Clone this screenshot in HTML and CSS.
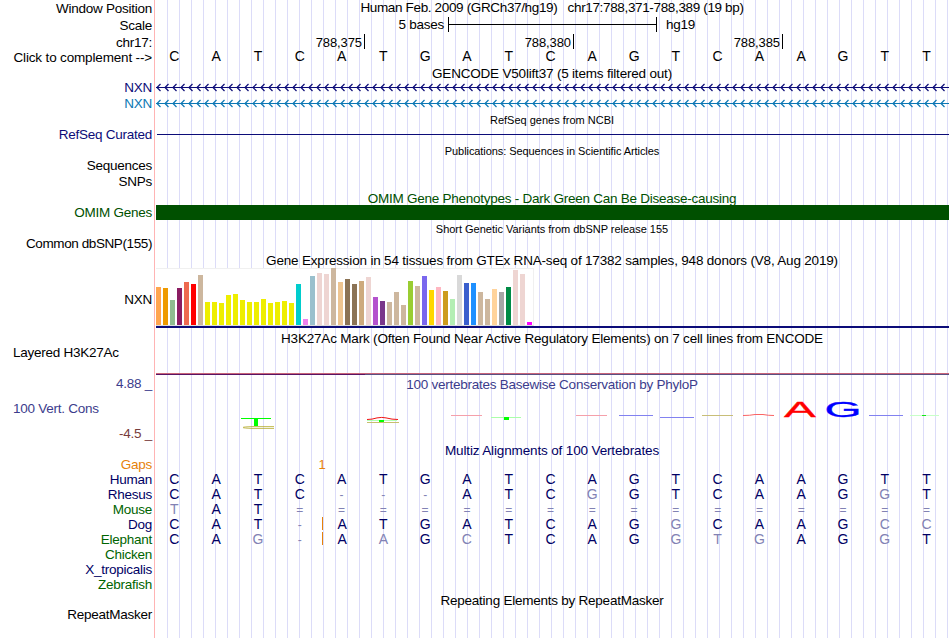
FILE: index.html
```
<!DOCTYPE html>
<html lang="en">
<head>
    <meta charset="UTF-8">
    <title>Genome Browser chr17:788,371-788,389</title>
    <link rel="stylesheet" href="styles.css">
</head>
<body>
    <div class="browser">
        <!-- position, scale, ruler -->
        <div class="row h17">
            <div class="label down">Window Position</div>
            <div class="view"><p class="title t-pos">Human Feb. 2009 (GRCh37/hg19)   chr17:788,371-788,389 (19 bp)</p></div>
        </div>
        <div class="row h17">
            <div class="label down">Scale</div>
            <div class="view scale">
                <span class="size">5 bases</span>
                <span class="ruler"></span>
                <span class="db">hg19</span>
            </div>
        </div>
        <div class="row h15">
            <div class="label down">chr17:</div>
            <div class="view ticks">
                <span>788,375</span>
                <span>788,380</span>
                <span>788,385</span>
            </div>
        </div>
        <div class="row h17">
            <div class="label down t-click">Click to complement --&gt;</div>
            <div class="view"><div class="bases black" data-seq="CATCATGATCAGTCAAGTT"></div></div>
        </div>

        <!-- genes -->
        <div class="row h14">
            <div class="label"></div>
            <div class="view"><p class="title t-gencode">GENCODE V50lift37 (5 items filtered out)</p></div>
        </div>
        <div class="row h16">
            <div class="label navy">NXN</div>
            <div class="view"><svg class="arrows navy" width="793" height="16"></svg></div>
        </div>
        <div class="row h16">
            <div class="label blue">NXN</div>
            <div class="view"><svg class="arrows blue" width="793" height="16"></svg></div>
        </div>
        <div class="row h15">
            <div class="label"></div>
            <div class="view"><p class="title small">RefSeq genes from NCBI</p></div>
        </div>
        <div class="row h16">
            <div class="label navy">RefSeq Curated</div>
            <div class="view"><div class="refseq"></div></div>
        </div>
        <div class="row h15">
            <div class="label"></div>
            <div class="view"><p class="title small t-pub">Publications: Sequences in Scientific Articles</p></div>
        </div>
        <div class="row h16">
            <div class="label">Sequences</div>
            <div class="view"></div>
        </div>
        <div class="row h16">
            <div class="label">SNPs</div>
            <div class="view"></div>
        </div>
        <div class="row h15">
            <div class="label"></div>
            <div class="view"><p class="title green down t-omim">OMIM Gene Phenotypes - Dark Green Can Be Disease-causing</p></div>
        </div>
        <div class="row h16">
            <div class="label green">OMIM Genes</div>
            <div class="view"><div class="omim"></div></div>
        </div>
        <div class="row h15">
            <div class="label"></div>
            <div class="view"><p class="title small t-snp">Short Genetic Variants from dbSNP release 155</p></div>
        </div>
        <div class="row h16">
            <div class="label t-common">Common dbSNP(155)</div>
            <div class="view"></div>
        </div>

        <!-- expression -->
        <div class="row h16">
            <div class="label"></div>
            <div class="view"><p class="title down t-gtex">Gene Expression in 54 tissues from GTEx RNA-seq of 17382 samples, 948 donors (V8, Aug 2019)</p></div>
        </div>
        <div class="row h62">
            <div class="label gtex-label">NXN</div>
            <div class="view">
                <div class="gtex" id="gtex"></div>
                <div class="gtex-line"></div>
            </div>
        </div>
        <div class="row h15">
            <div class="label"></div>
            <div class="view"><p class="title down t-h3k">H3K27Ac Mark (Often Found Near Active Regulatory Elements) on 7 cell lines from ENCODE</p></div>
        </div>
        <div class="row h32">
            <div class="label left">Layered H3K27Ac</div>
            <div class="view"><div class="h3k"></div></div>
        </div>

        <!-- conservation -->
        <div class="row h65">
            <div class="label cons">
                <span class="max">4.88 _</span>
                <span class="name">100 Vert. Cons</span>
                <span class="min">-4.5 _</span>
            </div>
            <div class="view">
                <p class="title indigo t-phylo">100 vertebrates Basewise Conservation by PhyloP</p>
                <svg class="logo" width="793" height="50" viewBox="156 392 793 50">
                    <path fill="#0f0" d="M241 418h30v1h-13v7h-4v-7h-13z"/>
                    <path fill="none" stroke="#b4aa28" stroke-width=".8" d="M274 426.6h-22q-9 .3-9 .9t9 .9h22"/>
                    <path fill="none" stroke="#f01414" d="M367 419.5q5 0 10-1.6 5-1 9 0 6 1.600 12 1.600"/>
                    <path fill="#b4ffb4" d="M367 420h30v1h-30z"/>
                    <path fill="#0f0" d="M379 420h5v2h-5z"/>
                    <path fill="#c8be6e" d="M367 422h32v1h-32z"/>
                    <path fill="#f5a0aa" d="M451 415h31v1h-31zM576 415h31v1h-31z"/>
                    <path fill="#aaffaa" d="M491 417h30v1h-30z"/>
                    <path fill="#0f0" d="M504 417h5v3h-5z"/>
                    <path fill="#8282f0" d="M619 415h34v1h-34zM660 417h34v1h-34zM869 415h34v1h-34z"/>
                    <path fill="#c8be78" d="M702 415h31v1h-31z"/>
                    <path fill="none" stroke="#fa6464" d="M743 415.500q7 0 12-1h8q5 1 11 1"/>
                    <path fill="#c8ffc8" d="M910 415h29v1h-29z"/>
                    <path fill="#14e614" d="M922 415h4v1h-4z"/>
                    <text transform="translate(784 417) scale(2.170 1)" fill="#f00" stroke="#f00">A</text>
                    <text transform="translate(824.500 417) scale(2.170 1)" fill="#00f" stroke="#00f">G</text>
                </svg>
            </div>
        </div>

        <!-- alignment -->
        <div class="row h15">
            <div class="label"></div>
            <div class="view"><p class="title dark down t-multiz">Multiz Alignments of 100 Vertebrates</p></div>
        </div>
        <div class="row h15">
            <div class="label orange">Gaps</div>
            <div class="view"><div class="bases"><span class="gap">1</span></div></div>
        </div>
        <div class="row h15">
            <div class="label dark">Human</div>
            <div class="view"><div class="bases" data-seq="CATCATGATCAGTCAAGTT"></div></div>
        </div>
        <div class="row h15">
            <div class="label dark">Rhesus</div>
            <div class="view"><div class="bases" data-seq="CATC---ATCgGTCAAGgT"></div></div>
        </div>
        <div class="row h15">
            <div class="label forest">Mouse</div>
            <div class="view"><div class="bases" data-seq="tAT================"></div></div>
        </div>
        <div class="row h15">
            <div class="label dark">Dog</div>
            <div class="view"><div class="bases" data-seq="CAT-|ATGATCAGgCAAGcc"></div></div>
        </div>
        <div class="row h15">
            <div class="label forest">Elephant</div>
            <div class="view"><div class="bases" data-seq="CAg-|AaGcTCAGgtgAGgT"></div></div>
        </div>
        <div class="row h15">
            <div class="label forest">Chicken</div>
            <div class="view"></div>
        </div>
        <div class="row h15">
            <div class="label dark">X_tropicalis</div>
            <div class="view"></div>
        </div>
        <div class="row h15">
            <div class="label forest">Zebrafish</div>
            <div class="view"></div>
        </div>
        <div class="row h15">
            <div class="label"></div>
            <div class="view"><p class="title down t-rep">Repeating Elements by RepeatMasker</p></div>
        </div>
        <div class="row h31">
            <div class="label">RepeatMasker</div>
            <div class="view"></div>
        </div>
    </div>
    <script src="script.js"></script>
</body>
</html>
```
FILE: styles.css
```
* {
    padding: 0;
    margin: 0;
    box-sizing: border-box;
}
body {
    width: 950px;
    height: 638px;
    overflow: hidden;
    background-color: #fff;
    font: 13.5px/15px "Liberation Sans", Arial, sans-serif;
    letter-spacing: -0.25px;
    color: #000;
}
.browser {
    width: 949px;
}
.row {
    display: flex;
}
.h14 { height: 14px; }
.h15 { height: 15px; }
.h16 { height: 16px; }
.h17 { height: 17px; }
.h31 { height: 31px; }
.h32 { height: 32px; }
.h62 { height: 62px; }
.h65 { height: 65px; }

.label {
    width: 154px;
    padding-right: 2px;
    text-align: right;
    white-space: pre;
}
.label.left {
    padding-left: 13px;
    text-align: left;
}
.down {
    padding-top: 1px;
}
/* red edge, then a blue guide line every 12px */
.view {
    width: 795px;
    border-left: 1px solid #ffb4b4;
    padding-left: 1px;
    background: linear-gradient(to right, transparent 11px, #dcdcf8 11px) 0 0 / 12px 100% content-box content-box;
}
.title {
    margin-left: -1px;
    text-align: center;
    white-space: pre;
}
.small {
    padding-top: 1px;
    font-size: 11px;
    letter-spacing: 0;
}
.t-pos { letter-spacing: -0.35px; }
.t-click { letter-spacing: -0.16px; }
.t-common { letter-spacing: -0.4px; }
.t-gencode,
.t-gtex,
.t-h3k { letter-spacing: -0.19px; }
.t-multiz { letter-spacing: -0.14px; }
.t-rep { letter-spacing: -0.24px; }
.t-pub { letter-spacing: -0.07px; }
.t-snp { letter-spacing: -0.02px; }

.navy { color: #0c0c78; }
.blue { color: #0c78b4; }
.dark { color: #000064; }
.green { color: #005000; }
.forest { color: #006400; }
.indigo { color: #3c3c8c; }
.orange { color: #e6820a; }

/* scale bar */
.scale {
    display: flex;
}
.size {
    width: 288px;
    text-align: right;
}
.ruler {
    width: 209px;
    height: 15px;
    margin-left: 4px;
    border-left: 1px solid #000;
    border-right: 1px solid #000;
    background: linear-gradient(#000, #000) 0 7px / 100% 1px no-repeat;
}
.db {
    margin-left: 9px;
}
.ticks {
    display: flex;
}
.ticks span {
    width: 209px;
    height: 15px;
    padding: 2px 2px 0 0;
    border-right: 1px solid #000;
    font-size: 13px;
    line-height: 13px;
    letter-spacing: -0.1px;
    text-align: right;
}

.bases {
    display: grid;
    grid-template-columns: repeat(19, 1fr);
    width: 794px;
    margin-left: -1px;
    font-size: 14px;
    letter-spacing: 0;
    color: #000064;
}
.bases.black {
    color: #000;
}
.bases span {
    height: 13px;
    padding-right: 3px;
    text-align: center;
}
.bases .pale {
    color: #8282b4;
}
.bases .sign {
    padding-top: 1px;
    font-size: 12px;
}
.bases .insert {
    border-left: 1px solid #e6820a;
}
.bases .gap {
    grid-column: 1 / 9;
    padding: 0;
    font-size: 13px;
    color: #e6820a;
}

.arrows {
    display: block;
}
.refseq {
    height: 1px;
    margin: 7px 0 0 1px;
    background-color: #0c0c78;
}
.omim {
    height: 15px;
    background-color: #005000;
}

/* bar chart */
.gtex-label {
    padding-top: 24px;
}
.gtex {
    display: flex;
    align-items: flex-end;
    gap: 2px;
    width: 378px;
    height: 58px;
    border: 1px solid #f0f0f0;
    border-left: 0;
    border-bottom-color: #dcdcdc;
    background-color: #fff;
}
.gtex i {
    flex: none;
    width: 5px;
}
.gtex-line {
    height: 2px;
    background-color: #0c0c78;
}
.h3k {
    height: 2px;
    margin-top: 28px;
    background: linear-gradient(#c86478, #c86478) 0 0 / 100% 1px no-repeat,
        linear-gradient(to right, #5a1464 209px, #5a5082 209px);
}

.cons {
    display: flex;
    flex-direction: column;
    margin-top: -1px;
    color: #3c3c8c;
}
.cons .name {
    margin: 10px 0 10px 13px;
    text-align: left;
}
.cons .min {
    color: #783c3c;
}
.logo {
    display: block;
    font-size: 22px;
    letter-spacing: 0;
}
.logo text {
    stroke-width: 0.3px;
}
```
FILE: script.js
```
// bases: small letter = differs from human, | = insert before the next base
var rows = document.querySelectorAll(".bases[data-seq]");
for (var i = 0; i < rows.length; i++) {
    var seq = rows[i].getAttribute("data-seq");
    var insert = false;
    for (var j = 0; j < seq.length; j++) {
        var c = seq[j];
        if (c == "|") {
            insert = true;
            continue;
        }
        var cell = document.createElement("span");
        cell.textContent = c.toUpperCase();
        if (c < "A" || c > "Z") {
            cell.classList.add("pale");
        }
        if (c == "-" || c == "=") {
            cell.classList.add("sign");
        }
        if (insert) {
            cell.classList.add("insert");
            insert = false;
        }
        rows[i].appendChild(cell);
    }
}

// strand arrows every 8px
var arrows = document.querySelectorAll(".arrows");
for (var i = 0; i < arrows.length; i++) {
    var d = "";
    for (var x = 1; x < 790; x += 8) {
        d += "M" + (x + 3.5) + " 4L" + x + " 7.5L" + (x + 3.5) + " 11";
    }
    arrows[i].innerHTML = '<path stroke="currentColor" d="M0 7.5H793"/>' +
        '<path fill="none" stroke="currentColor" stroke-width="1.2" d="' + d + '"/>';
}

// tissues: colour, height
var tissues = [
    ["#FFA54F", 38], ["#EE9A00", 37], ["#8FBC8F", 25], ["#8B1C62", 37], ["#EE6A50", 43], ["#FF0000", 41],
    ["#CDB79E", 50], ["#EEEE00", 23], ["#EEEE00", 23], ["#EEEE00", 22], ["#EEEE00", 30], ["#EEEE00", 31],
    ["#EEEE00", 25], ["#EEEE00", 23], ["#EEEE00", 23], ["#EEEE00", 26], ["#EEEE00", 22], ["#EEEE00", 23],
    ["#EEEE00", 24], ["#EEEE00", 22], ["#00CDCD", 41], ["#EE82EE", 6], ["#9AC0CD", 49], ["#EED5D2", 52],
    ["#EED5D2", 51], ["#CDB79E", 57], ["#EEC591", 43], ["#8B7355", 46], ["#8B7355", 41], ["#CDAA7D", 44],
    ["#EED5D2", 48], ["#B452CD", 28], ["#7A378B", 24], ["#CDB79E", 23], ["#CDB79E", 33], ["#CDB79E", 20],
    ["#9ACD32", 44], ["#CDB79E", 39], ["#7A67EE", 49], ["#FFD700", 35], ["#FFB6C1", 38], ["#CD9B1D", 34],
    ["#B4EEB4", 26], ["#D9D9D9", 50], ["#3A5FCD", 42], ["#1E90FF", 42], ["#CDB79E", 33], ["#CDB79E", 26],
    ["#FFD39B", 36], ["#A6A6A6", 33], ["#008B45", 38], ["#EED5D2", 55], ["#EED5D2", 51], ["#FF00FF", 3]
];
var gtex = document.getElementById("gtex");
for (var i = 0; i < tissues.length; i++) {
    var bar = document.createElement("i");
    bar.style.backgroundColor = tissues[i][0];
    bar.style.height = tissues[i][1] + "px";
    gtex.appendChild(bar);
}
```
